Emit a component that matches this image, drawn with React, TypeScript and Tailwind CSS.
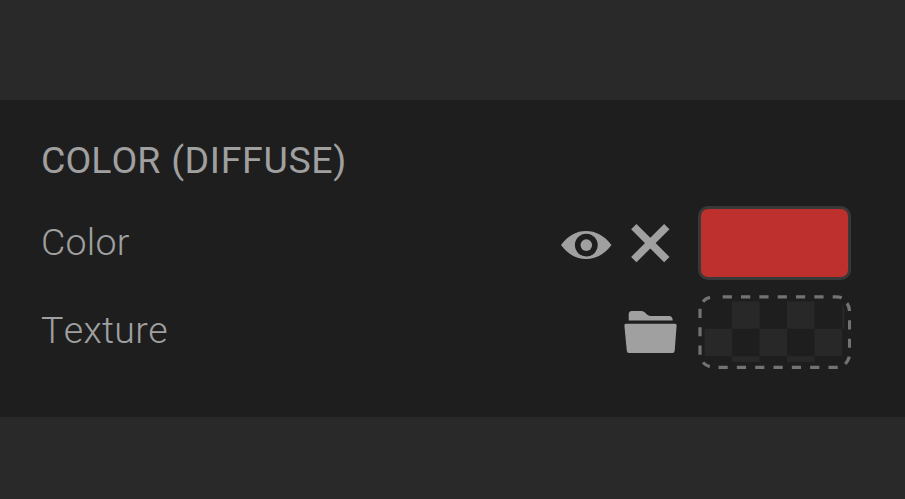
import React from 'react';

function EyeIcon() {
  return (
    <svg width="52" height="30" viewBox="0 0 52 30" className="block" fill="#a0a0a0">
      <path
        fillRule="evenodd"
        d="M1 15C8 5.500 16.500 1 26 1s18.500 4.500 25.500 14c-7 9.500-16 14-25.500 14S8 24.500 1 15ZM26.300 3.700a11.400 11.400 0 1 0 0 22.800a11.400 11.400 0 1 0 0-22.800Z"
      />
      <circle cx="26.3" cy="15.100" r="5.800" />
    </svg>
  );
}

function CrossIcon() {
  return (
    <svg width="40" height="40" viewBox="0 0 40 40" className="block">
      <path d="M3.800 3.600L36.800 36.600M36.800 3.600L3.800 36.600" stroke="#a0a0a0" strokeWidth="7.600" />
    </svg>
  );
}

function FolderIcon() {
  return (
    <svg width="53" height="43" viewBox="0 0 53 43" className="block" fill="#a0a0a0">
      <path d="M4.700 10.600V4.400C4.700 2.100 6 1 8 1H17.500C21 1 23 6 26.500 6H45C47.500 6 48.700 7.600 48.700 10.600Z" />
      <path d="M2 13.800H51Q52.800 13.800 52.600 15.800L50.700 40.800Q50.500 43 48.500 43H5Q3 43 2.800 40.800L.4 15.800Q.2 13.800 2 13.800Z" />
    </svg>
  );
}

function TextureSwatch() {
  return (
    <svg width="153" height="74" viewBox="0 0 153 74" className="block">
      <defs>
        <clipPath id="well">
          <rect x="6.300" y="6.300" width="140.200" height="60.700" rx="9" />
        </clipPath>
      </defs>
      <g clipPath="url(#well)" fill="#282828">
        <rect x="34" y="6.300" width="27.600" height="27.400" />
        <rect x="89" y="6.300" width="27.600" height="27.400" />
        <rect x="144.200" y="6.300" width="2.500" height="27.400" />
        <rect x="6.300" y="33.700" width="27.700" height="27.500" />
        <rect x="61.600" y="33.700" width="27.400" height="27.500" />
        <rect x="116.600" y="33.700" width="27.600" height="27.500" />
        <rect x="34" y="61.200" width="27.600" height="6" />
        <rect x="89" y="61.200" width="27.600" height="6" />
      </g>
      <g fill="none" stroke="#737373" strokeWidth="3.200">
        <path d="M24.700 1.900H138Q141.500 1.900 143.700 2.800" strokeDasharray="9.200 9.130" />
        <path d="M149 8.300Q151.300 11.500 151.500 16" />
        <path d="M151.600 25.300V53" strokeDasharray="9.200 9.130" />
        <path d="M151.300 61.700Q150.500 65.500 147.300 69" />
        <path d="M139.700 72.300H20.500" strokeDasharray="9.200 9.130" />
        <path d="M11.800 71.600Q8 70.700 5 67.500" />
        <path d="M2 59.700V13.800" strokeDasharray="9.200 9.130" />
        <path d="M4.900 6.600Q8 3.200 12 2.400" />
      </g>
    </svg>
  );
}

export default function App() {
  return (
    <div className="flex h-[499px] w-[905px] flex-col justify-start bg-[#292929] pt-[100px] font-['Roboto',sans-serif] text-[37.500px] leading-[44px] text-[#a0a0a0] [font-kerning:none]">
      <section className="flex h-[317px] flex-col bg-[#1e1e1e] pt-[38px] pr-[54px] pl-[41px]">
        <h2 className="whitespace-nowrap [word-spacing:1.500px]">
          COLOR <span className="tracking-[0.650px]">(DIFFUSE)</span>
        </h2>
        <div className="mt-6 flex h-[74px] items-start font-light">
          <span className="mt-[14px] flex-1 tracking-[0.250px]">Color</span>
          <div className="flex items-start">
            <div className="mt-6">
              <EyeIcon />
            </div>
            <div className="mt-[17px] ml-[18px]">
              <CrossIcon />
            </div>
            <div className="ml-7 h-[74px] w-[153px] rounded-[10px] border-[3px] border-[#383838] bg-[#bd302d]" />
          </div>
        </div>
        <div className="mt-[15px] flex h-[74px] items-start font-light">
          <span className="mt-[13px] flex-1 tracking-[0.300px]">Texture</span>
          <div className="mt-[15px] mr-[21px]">
            <FolderIcon />
          </div>
          <TextureSwatch />
        </div>
      </section>
    </div>
  );
}
